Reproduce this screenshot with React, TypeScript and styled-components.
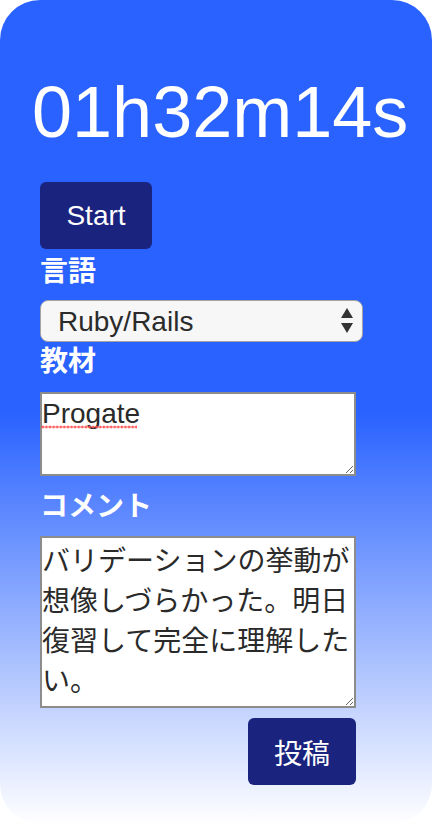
import React from "react";
import styled, { createGlobalStyle } from "styled-components";

const GlobalStyle = createGlobalStyle`
  html, body {
    margin: 0;
    padding: 0;
    background: #ffffff;
  }
  body {
    font-family: "Liberation Sans", "Noto Sans CJK JP", sans-serif;
  }
`;

const Card = styled.div`
  width: 432px;
  height: 824px;
  box-sizing: border-box;
  border-radius: 40px;
  background: linear-gradient(to bottom, #2962ff 50%, #ffffff 100%);
  padding: 71px 0 0 40px;
  display: flex;
  flex-direction: column;
  align-items: flex-start;
`;

const Timer = styled.h1`
  margin: 0 0 0 -8px;
  font-family: "Liberation Sans", sans-serif;
  font-weight: 400;
  font-size: 72px;
  line-height: 83px;
  color: #ffffff;
  white-space: nowrap;
`;

const Button = styled.button<{ $mt: number; $w: number }>`
  margin-top: ${(p) => p.$mt}px;
  width: ${(p) => p.$w}px;
  height: 67px;
  border: none;
  border-radius: 6px;
  background: #1a237e;
  color: #ffffff;
  font-family: "Liberation Sans", "Noto Sans CJK JP", sans-serif;
  font-size: 28px;
  padding: 0;
  cursor: pointer;
`;

const Label = styled.div<{ $mt: number; $mb: number }>`
  margin: ${(p) => p.$mt}px 0 ${(p) => p.$mb}px 0;
  font-family: "Noto Sans CJK JP", sans-serif;
  font-weight: 700;
  font-size: 28px;
  line-height: 28px;
  color: #ffffff;
`;

const SelectWrap = styled.div`
  position: relative;
  width: 323px;
  height: 42px;
`;

const Select = styled.select`
  appearance: none;
  -webkit-appearance: none;
  width: 323px;
  height: 42px;
  box-sizing: border-box;
  border: 1.5px solid #a3a3a3;
  border-radius: 8px;
  background: #f7f7f7;
  color: #2b2b2b;
  font-family: "Liberation Sans", sans-serif;
  font-size: 28px;
  padding: 0 0 0 17px;
  outline: none;
`;

const Arrows = styled.svg`
  position: absolute;
  right: 9px;
  top: 8px;
  pointer-events: none;
`;

const AreaWrap = styled.div`
  position: relative;
`;

const TextArea = styled.textarea<{ $h: number; $pt: number }>`
  display: block;
  width: 316px;
  height: ${(p) => p.$h}px;
  box-sizing: border-box;
  border: 2px solid #8c8c8c;
  border-radius: 0;
  background: #ffffff;
  color: #2a2a2a;
  font-family: "Liberation Sans", "Noto Sans CJK JP", sans-serif;
  font-size: 28px;
  padding: ${(p) => p.$pt}px 0 0 0;
  margin: 0;
  outline: none;
  overflow: hidden;
`;

const Squiggle = styled.span`
  position: absolute;
  left: 1px;
  top: 33px;
  width: 96px;
  height: 4px;
  background-image: radial-gradient(circle, rgba(255, 80, 80, 0.9) 1.2px, transparent 1.7px);
  background-size: 3.6px 4px;
  background-repeat: repeat-x;
  pointer-events: none;
`;

const FormColumn = styled.div`
  width: 316px;
  display: flex;
  flex-direction: column;
  align-items: flex-start;
`;

const SubmitRow = styled.div`
  width: 316px;
  display: flex;
  justify-content: flex-end;
`;

export default function App() {
  return (
    <>
      <GlobalStyle />
      <Card>
        <Timer>01h32m14s</Timer>
        <Button $mt={28} $w={112}>Start</Button>
        <FormColumn>
          <Label $mt={6} $mb={17}>言語</Label>
          <SelectWrap>
            <Select defaultValue="ruby">
              <option value="ruby">Ruby/Rails</option>
            </Select>
            <Arrows width="14" height="26" viewBox="0 0 14 26">
              <path d="M7 0 L13 10 L1 10 Z" fill="#333" />
              <path d="M1 15 L13 15 L7 25 Z" fill="#333" />
            </Arrows>
          </SelectWrap>
          <Label $mt={3} $mb={19}>教材</Label>
          <AreaWrap>
            <TextArea $h={84} $pt={4} defaultValue="Progate" spellCheck={false} />
            <Squiggle />
          </AreaWrap>
          <Label $mt={14} $mb={18}>コメント</Label>
          <TextArea
            $h={172}
            $pt={1}
            spellCheck={false}
            defaultValue="バリデーションの挙動が想像しづらかった。明日復習して完全に理解したい。"
          />
          <SubmitRow>
            <Button $mt={10} $w={108}>投稿</Button>
          </SubmitRow>
        </FormColumn>
      </Card>
    </>
  );
}
